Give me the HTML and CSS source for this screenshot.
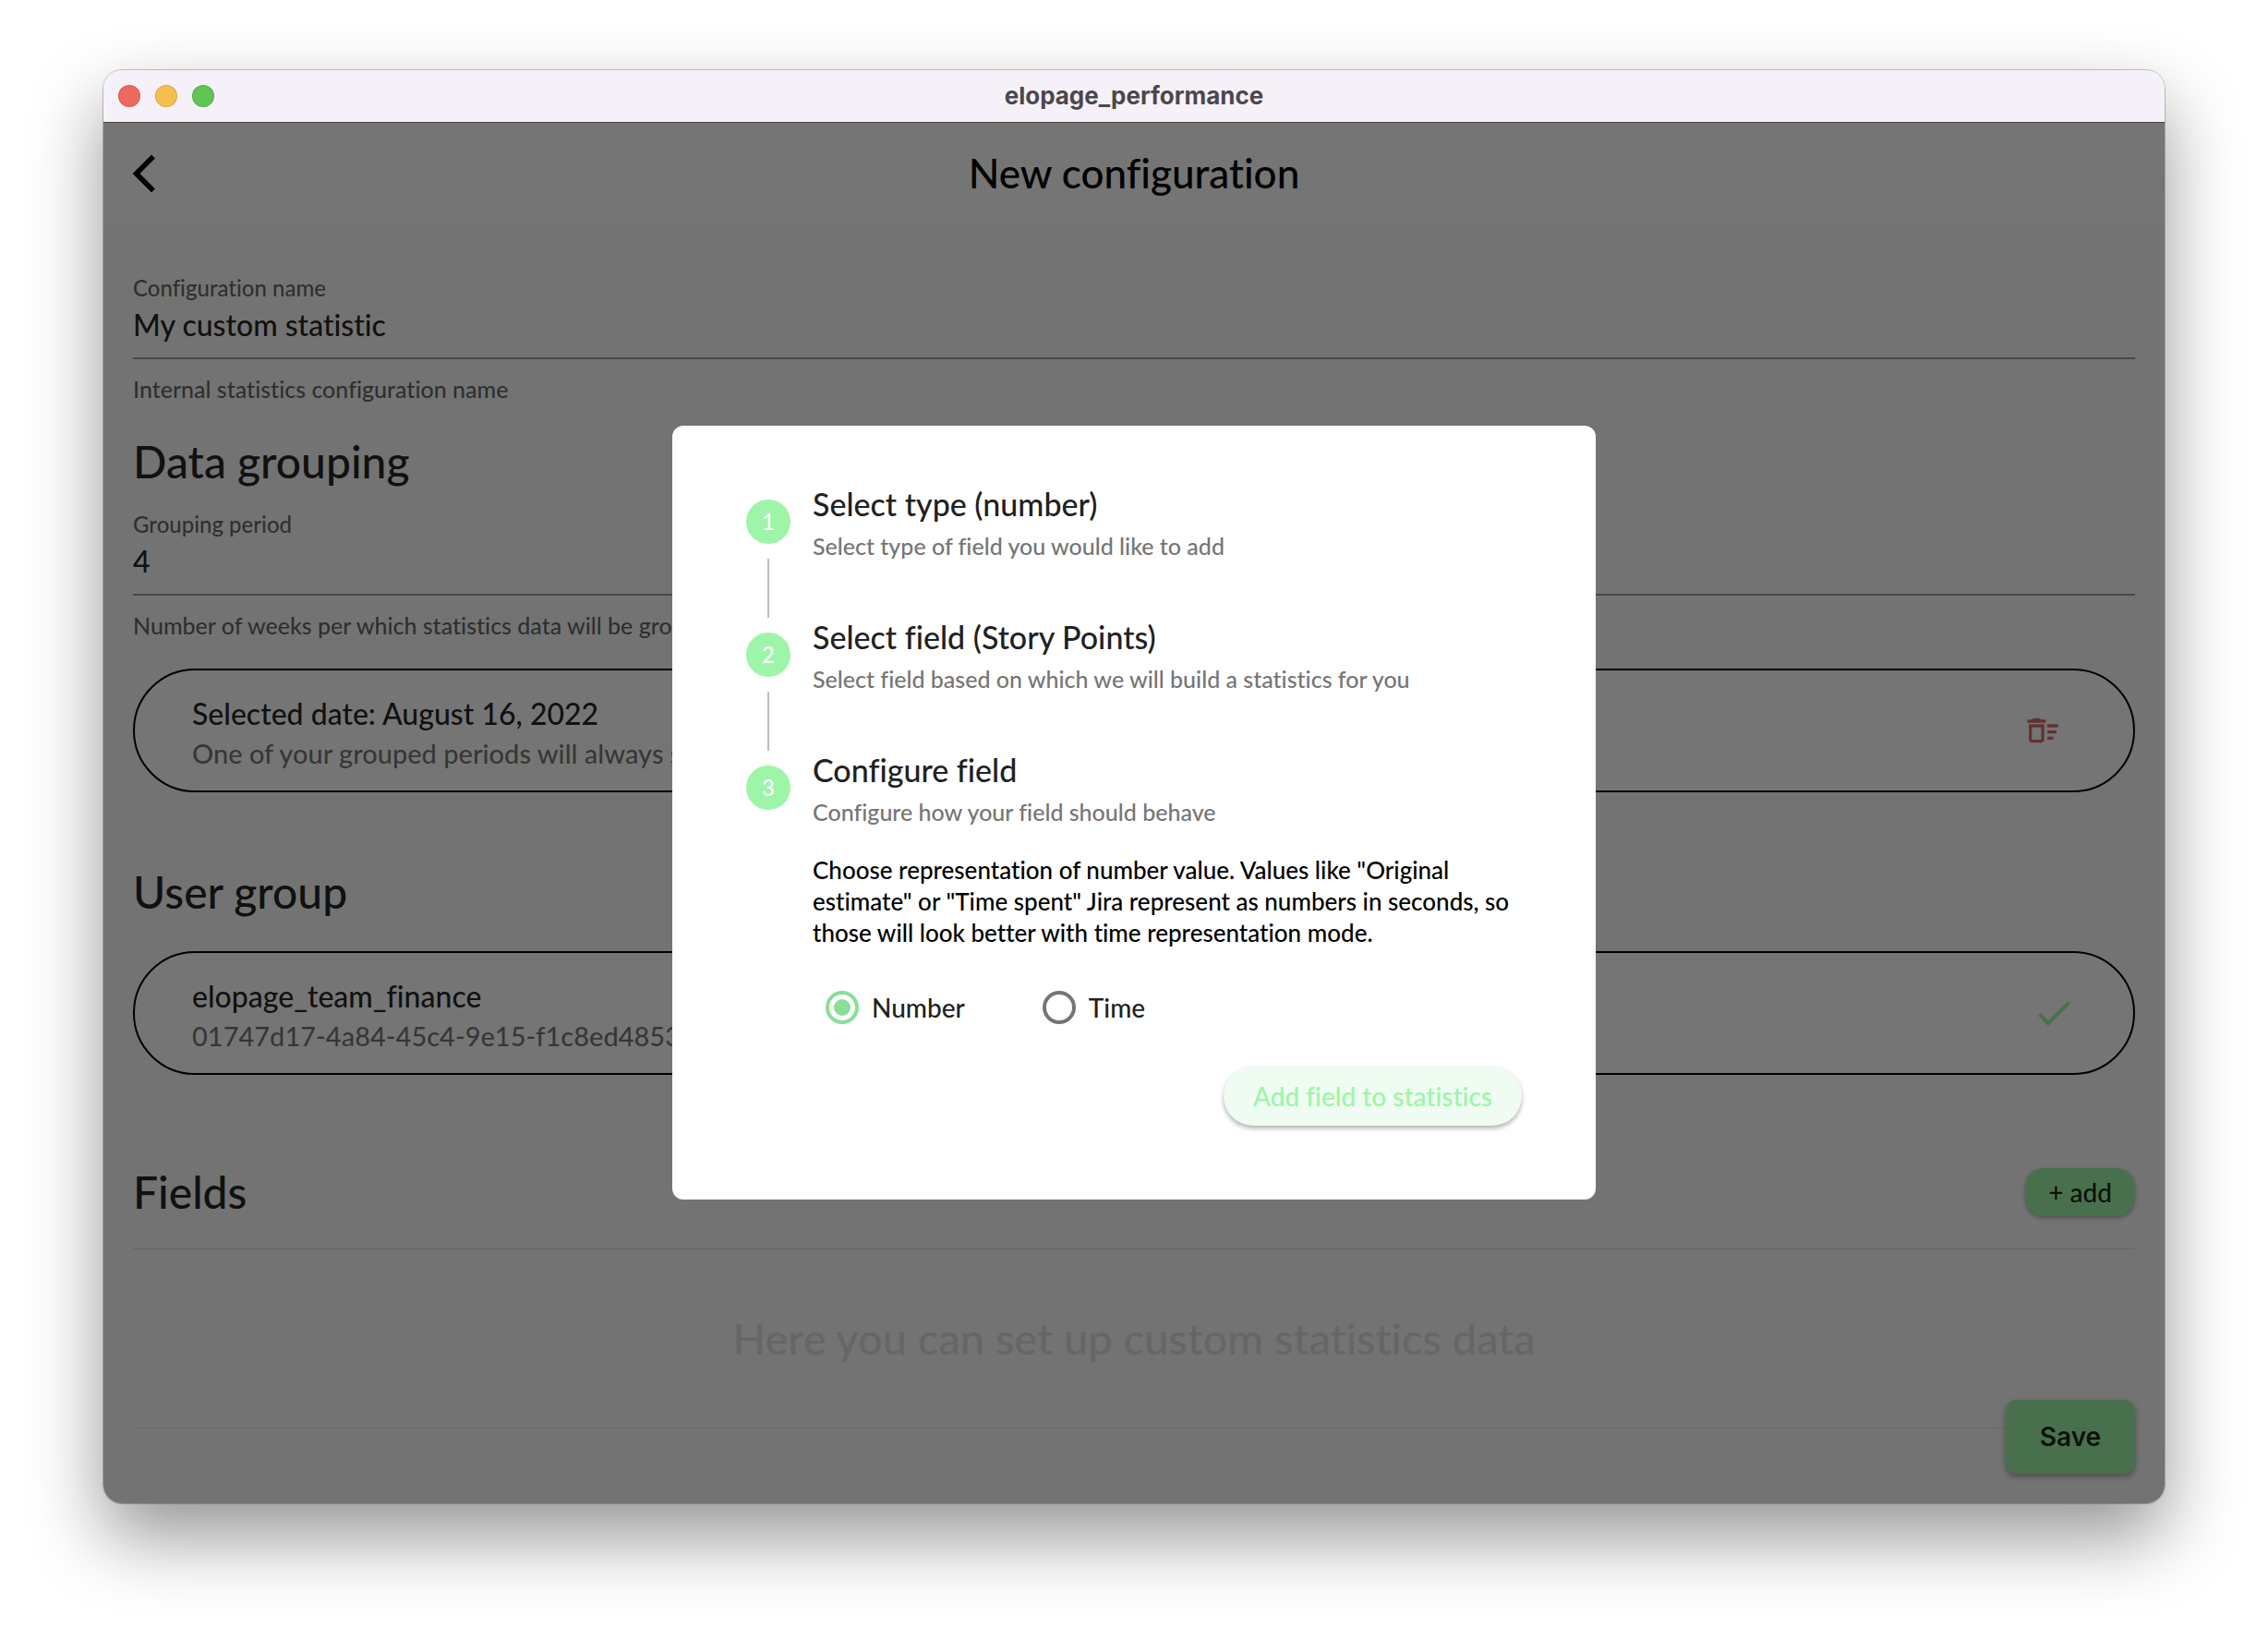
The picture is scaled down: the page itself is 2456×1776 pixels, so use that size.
FILE: index.html
```html
<!DOCTYPE html>
<html lang="en">
<head>
  <meta charset="utf-8">
  <meta name="viewport" content="width=device-width, initial-scale=1">
  <title>elopage_performance</title>
  <link rel="stylesheet" href="styles.css">
</head>
<body>
  <div class="window">
    <header class="titlebar">
      <div class="lights">
        <span class="light light-close"></span>
        <span class="light light-minimize"></span>
        <span class="light light-zoom"></span>
      </div>
      <span class="titlebar-text">elopage_performance</span>
    </header>

    <div class="app">
      <div class="appbar">
        <button class="back" type="button" aria-label="Back">
          <svg viewBox="6 2 12 20" width="24" height="40"><path d="M17.77 3.77L16 2 6 12l10 10 1.77-1.77L9.54 12z" stroke="#000" stroke-width="0.4"/></svg>
        </button>
        <h1 class="appbar-title">New configuration</h1>
      </div>

      <main class="content">
        <div class="field">
          <label class="field-label" for="config-name">Configuration name</label>
          <input class="field-input" id="config-name" type="text" value="My custom statistic">
          <p class="field-helper">Internal statistics configuration name</p>
        </div>

        <section class="section section-grouping">
          <h2 class="heading">Data grouping</h2>
          <div class="field">
            <label class="field-label" for="period">Grouping period</label>
            <input class="field-input" id="period" type="text" value="4">
            <p class="field-helper">Number of weeks per which statistics data will be grouped</p>
          </div>
          <div class="pill pill-date">
            <div class="pill-text">
              <p class="pill-title">Selected date: August 16, 2022</p>
              <p class="pill-sub">One of your grouped periods will always start from this date</p>
            </div>
            <button class="icon-button" type="button" aria-label="Clear date">
              <svg class="icon-clear" viewBox="0 0 24 24" width="40" height="40"><path d="M15 16h4v2h-4zm0-8h7v2h-7zm0 4h6v2h-6zM3 18c0 1.1.9 2 2 2h6c1.1 0 2-.9 2-2V8H3v10zm2-8h6v8H5v-8zm5-6H6L5 5H2v2h12V5h-3z"/></svg>
            </button>
          </div>
        </section>

        <section class="section section-users">
          <h2 class="heading">User group</h2>
          <div class="pill">
            <div class="pill-text">
              <p class="pill-title">elopage_team_finance</p>
              <p class="pill-sub">01747d17-4a84-45c4-9e15-f1c8ed4853</p>
            </div>
            <svg class="icon-check" viewBox="0 0 24 24" width="48" height="48"><path d="M9 16.17L4.83 12l-1.42 1.41L9 19 21 7l-1.41-1.41z"/></svg>
          </div>
        </section>

        <section class="section section-fields">
          <div class="fields-head">
            <h2 class="heading">Fields</h2>
            <button class="add" type="button">+ add</button>
          </div>
          <p class="empty">Here you can set up custom statistics data</p>
        </section>
      </main>

      <button class="save" type="button">Save</button>

      <div class="scrim">
        <div class="dialog" role="dialog" aria-label="Add field">
          <ol class="steps">
            <li class="step">
              <div class="marker"><span class="circle">1</span><span class="line"></span></div>
              <div class="step-text">
                <h3 class="step-title">Select type (number)</h3>
                <p class="step-sub">Select type of field you would like to add</p>
              </div>
            </li>
            <li class="step">
              <div class="marker"><span class="circle">2</span><span class="line"></span></div>
              <div class="step-text">
                <h3 class="step-title">Select field (Story Points)</h3>
                <p class="step-sub">Select field based on which we will build a statistics for you</p>
              </div>
            </li>
            <li class="step">
              <div class="marker"><span class="circle">3</span></div>
              <div class="step-text">
                <h3 class="step-title">Configure field</h3>
                <p class="step-sub">Configure how your field should behave</p>
                <p class="step-body">Choose representation of number value. Values like "Original<br>estimate" or "Time spent" Jira represent as numbers in seconds, so<br>those will look better with time representation mode.</p>
                <div class="radios">
                  <label class="radio"><input type="radio" name="mode" checked>Number</label>
                  <label class="radio"><input type="radio" name="mode">Time</label>
                </div>
                <button class="submit" type="button">Add field to statistics</button>
              </div>
            </li>
          </ol>
        </div>
      </div>
    </div>
  </div>
</body>
</html>
```
FILE: styles.css
```css
* {
  box-sizing: border-box;
}

body {
  margin: 0;
  padding: 76px 112px 148px;
  min-height: 100vh;
  display: flex;
  background: #fff;
  color: rgba(0, 0, 0, 0.87);
  font-family: Lato, sans-serif;
  font-weight: 500;
  font-variant-ligatures: none;
}

h1, h2, h3, p, ol {
  margin: 0;
  padding: 0;
  font-weight: inherit;
}

button, input {
  font-family: inherit;
  font-weight: inherit;
  font-variant-ligatures: inherit;
  color: inherit;
}

button {
  border: 0;
  padding: 0;
  background: none;
  cursor: pointer;
}

/* Window frame */

.window {
  flex: 1;
  min-width: 0;
  display: flex;
  flex-direction: column;
  overflow: hidden;
  border-radius: 20px;
  box-shadow: 0 0 0 1px rgba(0, 0, 0, 0.22), 0 36px 80px rgba(0, 0, 0, 0.42);
}

.titlebar {
  display: grid;
  grid-template-columns: 1fr auto 1fr;
  align-items: center;
  height: 56px;
  padding: 0 16px;
  background: #f6f1f8;
}

.lights {
  display: flex;
  gap: 16px;
}

.light {
  width: 24px;
  height: 24px;
  border-radius: 50%;
  border: 1px solid rgba(0, 0, 0, 0.12);
}

.light-close { background: #ed6a5e; }
.light-minimize { background: #f5bf4f; }
.light-zoom { background: #61c554; }

.titlebar-text {
  font: 700 26px/32px Inter, sans-serif;
  color: #4a484b;
}

/* App */

.app {
  position: relative;
  flex: 1;
  background: #fafafa;
}

.appbar {
  display: grid;
  grid-template-columns: 1fr auto 1fr;
  align-items: center;
  height: 112px;
  padding: 0 32px;
  background: #fff;
  color: #000;
}

.back {
  display: flex;
  justify-self: start;
}

.appbar-title {
  padding-bottom: 2px;
  font-size: 44px;
  line-height: 56px;
}

.content {
  padding: 54px 32px 80px;
}

.field {
  display: flex;
  flex-direction: column;
}

.field-label,
.field-helper {
  font-size: 24px;
  line-height: 28px;
  color: rgba(0, 0, 0, 0.6);
}

.field-input {
  width: 100%;
  height: 63px;
  padding: 5px 0 16px;
  border: 0;
  border-bottom: 2px solid #9b9b9b;
  background: none;
  font-size: 32px;
  line-height: 40px;
  outline: 0;
}

.field-helper {
  margin-top: 18px;
  font-size: 25px;
}

.heading {
  font-size: 48px;
  line-height: 58px;
}

.section-grouping {
  margin-top: 36px;
}

.section-grouping .heading {
  margin-bottom: 25px;
}

.section-users {
  margin-top: 79px;
}

.section-users .heading {
  margin-bottom: 35px;
}

.section-fields {
  margin-top: 98px;
}

.pill {
  display: flex;
  align-items: center;
  justify-content: space-between;
  padding: 23px 62px;
  border: 2px solid #000;
  border-radius: 68px;
  background: #fff;
}

.pill-date {
  margin-top: 33px;
  padding-right: 78px;
}

.pill-text {
  padding-top: 4px;
}

.pill-title {
  font-size: 32px;
  line-height: 40px;
}

.pill-sub {
  margin-top: 6px;
  font-size: 29px;
  line-height: 34px;
  color: rgba(0, 0, 0, 0.54);
}

.icon-button {
  display: flex;
}

.icon-clear { fill: #d4706c; }
.icon-check { fill: #9df5a7; }

.fields-head {
  display: flex;
  align-items: center;
  justify-content: space-between;
  padding-bottom: 31px;
  border-bottom: 2px solid #e8e8e8;
}

.add {
  height: 52px;
  padding: 0 25px;
  border-radius: 20px;
  background: #9df5a7;
  box-shadow: 0 2px 4px rgba(0, 0, 0, 0.3);
  font-size: 28px;
  line-height: 34px;
}

.empty {
  padding: 67px 0 68px;
  border-bottom: 1px solid #e6e6e6;
  text-align: center;
  font-size: 47px;
  line-height: 58px;
  color: #dedede;
}

.save {
  position: absolute;
  right: 32px;
  bottom: 32px;
  width: 140px;
  height: 80px;
  border-radius: 12px;
  background: #9df5a7;
  box-shadow: 0 3px 6px rgba(0, 0, 0, 0.35);
  font: 600 28px/34px Inter, sans-serif;
}

/* Dialog */

.scrim {
  position: absolute;
  inset: 0;
  display: flex;
  align-items: center;
  justify-content: center;
  background: rgba(0, 0, 0, 0.54);
  box-shadow: inset 0 1px 0 rgba(0, 0, 0, 0.4);
}

.dialog {
  width: 1000px;
  max-width: 90%;
  padding: 64px 80px 80px;
  border-radius: 12px;
  background: #fff;
}

.steps {
  list-style: none;
}

.step {
  display: flex;
  gap: 24px;
  min-height: 144px;
}

.marker {
  display: flex;
  flex-direction: column;
  align-items: center;
  gap: 16px;
  padding-top: 16px;
}

.circle {
  display: grid;
  place-items: center;
  width: 48px;
  height: 48px;
  border-radius: 50%;
  background: #9df5a7;
  font-size: 24px;
  line-height: 28px;
  color: #fff;
}

.line {
  flex: 1;
  width: 2px;
  background: #bdbdbd;
}

.step-text {
  flex: 1;
  display: flex;
  flex-direction: column;
}

.step-title {
  font-size: 34px;
  line-height: 42px;
  color: #212121;
}

.step-sub {
  margin-top: 10px;
  font-size: 25px;
  line-height: 28px;
  color: #757575;
}

.step-body {
  margin-top: 32px;
  font-size: 26px;
  line-height: 34px;
  white-space: nowrap;
  color: #000;
}

.radios {
  display: flex;
  gap: 84px;
  margin: 46px 14px;
}

.radio {
  display: flex;
  align-items: center;
  gap: 14px;
  font-size: 28px;
  line-height: 36px;
  color: #212121;
}

.radio input {
  appearance: none;
  display: grid;
  place-items: center;
  width: 36px;
  height: 36px;
  margin: 0;
  border: 4px solid #757575;
  border-radius: 50%;
}

.radio input:checked {
  border-color: #8ade98;
}

.radio input:checked::before {
  content: "";
  width: 18px;
  height: 18px;
  border-radius: 50%;
  background: #8ade98;
}

.submit {
  align-self: flex-end;
  height: 64px;
  padding: 0 32px;
  border-radius: 32px;
  background: #effcf2;
  box-shadow: 0 3px 5px rgba(0, 0, 0, 0.3);
  font-size: 28px;
  line-height: 34px;
  color: #9df5a7;
}
```
